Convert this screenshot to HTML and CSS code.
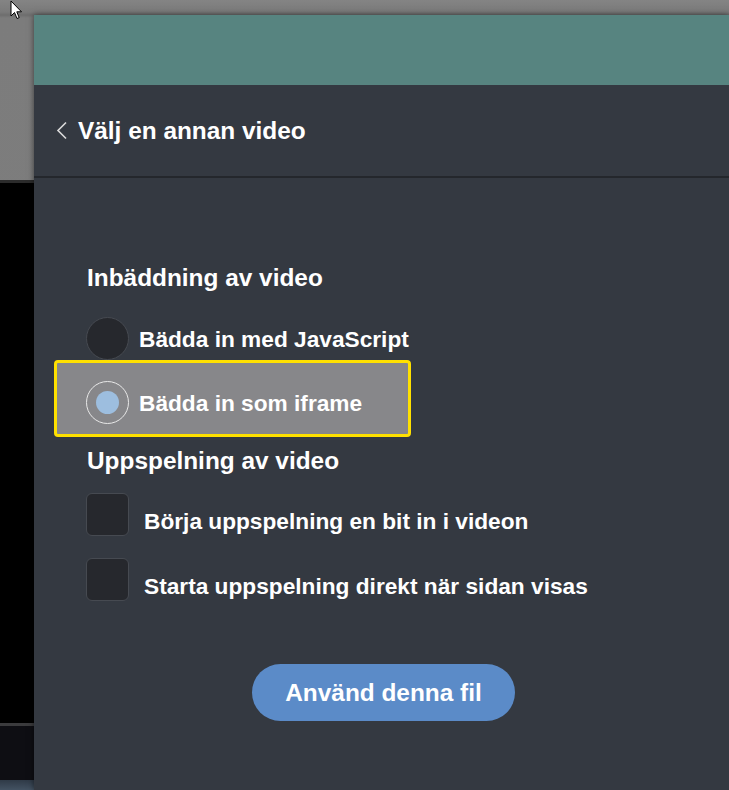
FILE: index.html
```html
<!DOCTYPE html>
<html lang="sv">
<head>
<meta charset="utf-8">
<title>Välj video</title>
<link rel="stylesheet" href="styles.css">
</head>
<body>
<div class="stage">
  <div class="backdrop">
    <div class="bd-gray"></div>
    <div class="bd-edge"></div>
    <div class="bd-video"></div>
    <div class="bd-line"></div>
    <div class="bd-bar"></div>
    <div class="bd-blue"></div>
  </div>
  <section class="panel">
    <div class="panel-top"></div>
    <header class="nav">
      <svg class="back" width="12" height="19" viewBox="0 0 12 19" aria-hidden="true"><path d="M10 1.5 L2 9.5 L10 17.5" fill="none" stroke="#dcdcdc" stroke-width="1.6"/></svg>
      <h1 class="title">Välj en annan video</h1>
    </header>
    <div class="content">
      <h2 class="heading">Inbäddning av video</h2>
      <div class="radio-row">
        <span class="radio"></span>
        <span class="label">Bädda in med JavaScript</span>
      </div>
      <div class="radio-row focused">
        <span class="radio checked"><span class="dot"></span></span>
        <span class="label">Bädda in som iframe</span>
      </div>
      <h2 class="heading second">Uppspelning av video</h2>
      <div class="check-row">
        <span class="check"></span>
        <span class="label">Börja uppspelning en bit in i videon</span>
      </div>
      <div class="check-row">
        <span class="check"></span>
        <span class="label">Starta uppspelning direkt när sidan visas</span>
      </div>
      <div class="actions">
        <button class="primary" type="button">Använd denna fil</button>
      </div>
    </div>
  </section>
</div>
<svg class="cursor" width="14" height="20" viewBox="0 0 14 20" aria-hidden="true"><path d="M1 1 L1 16 L4.5 12.5 L7 18.5 L9.2 17.6 L6.8 11.8 L11.5 11.8 Z" fill="#fff" stroke="#000" stroke-width="1" stroke-linejoin="miter"/></svg>
</body>
</html>
```
FILE: styles.css
```css
* { box-sizing: border-box; }
html, body { margin: 0; padding: 0; }
body {
  width: 729px;
  height: 790px;
  overflow: hidden;
  background: linear-gradient(#848484, #7a7a7a 12px, #6e6e6e 15px, #7c7c7c 18px, #7f7f7f);
  font-family: "Liberation Sans", Arial, sans-serif;
  font-weight: bold;
  color: #ffffff;
  position: relative;
}
.stage {
  display: flex;
  height: 790px;
}
.backdrop {
  width: 34px;
  flex: none;
  display: flex;
  flex-direction: column;
}
.bd-gray { height: 180px; }
.bd-edge { height: 3px; background: #2b2b2b; }
.bd-video { flex: 1; background: #000; }
.bd-line { height: 3px; background: #3b3b3d; }
.bd-bar { height: 54px; background: #0e0e13; }
.bd-blue { height: 10px; background: linear-gradient(#2f3a47, #435262); }

.panel {
  flex: 1;
  margin-top: 15px;
  background: #343941;
  box-shadow: 0 0 6px rgba(0, 0, 0, 0.55);
  display: flex;
  flex-direction: column;
  min-width: 0;
}
.panel-top {
  height: 70px;
  background: #578480;
}
.nav {
  height: 93px;
  border-bottom: 2px solid #24272c;
  display: flex;
  align-items: center;
  padding-left: 22px;
  gap: 10px;
}
.back { display: block; flex: none; }
.title {
  margin: 0;
  font-size: 24.4px;
  line-height: 28px;
  font-weight: bold;
}
.content {
  padding: 86px 0 0 52px;
  display: flex;
  flex-direction: column;
  align-items: flex-start;
}
.heading {
  margin: 0;
  font-size: 24.4px;
  line-height: 28px;
  font-weight: bold;
  padding-left: 1px;
}
.heading.second { margin-top: 10px; }
.radio-row {
  display: flex;
  align-items: center;
  gap: 10px;
  margin-top: 25px;
}
.radio-row + .radio-row { margin-top: 0; }
.radio {
  width: 43px;
  height: 43px;
  border-radius: 50%;
  background: #26282d;
  border: 1px solid #464a51;
  flex: none;
  display: flex;
  align-items: center;
  justify-content: center;
}
.radio.checked {
  background: transparent;
  border-color: #e8e8e8;
}
.dot {
  width: 23px;
  height: 23px;
  border-radius: 50%;
  background: #9dbedf;
}
.label {
  font-size: 22.7px;
  line-height: 26px;
  white-space: nowrap;
}
.focused {
  margin-left: -32px;
  width: 357px;
  padding: 18px 0 10px 29px;
  border: 3px solid #ffe100;
  border-radius: 4px;
  background: #87878a;
}
.check-row {
  display: flex;
  align-items: flex-start;
  gap: 15px;
  margin-top: 18px;
}
.check-row + .check-row { margin-top: 22px; }
.check {
  width: 43px;
  height: 43px;
  border-radius: 6px;
  background: #26282d;
  border: 1px solid #464a51;
  flex: none;
}
.check-row .label { padding-top: 15px; }
.actions {
  align-self: stretch;
  margin-left: -52px;
  padding-left: 4px;
  margin-top: 63px;
  display: flex;
  justify-content: center;
}
.primary {
  width: 263px;
  height: 57px;
  border: none;
  border-radius: 29px;
  background: #5b8bc8;
  color: #ffffff;
  font-family: "Liberation Sans", Arial, sans-serif;
  font-weight: bold;
  font-size: 24.4px;
  line-height: 28px;
  padding: 0;
}
.cursor {
  position: absolute;
  left: 10px;
  top: 0;
}
```
